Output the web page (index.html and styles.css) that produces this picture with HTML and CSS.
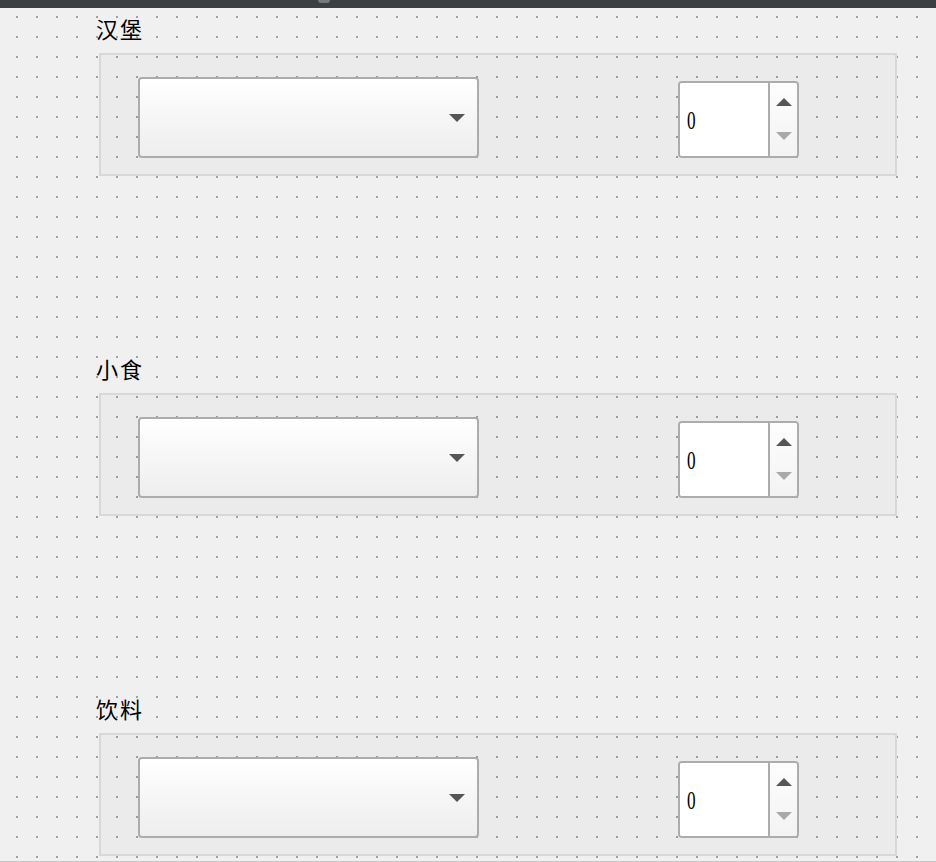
FILE: index.html
```html
<!DOCTYPE html>
<html lang="zh">
<head>
<meta charset="utf-8">
<title>点餐</title>
<link rel="stylesheet" href="styles.css">
</head>
<body>
<div class="window">
  <div class="titlebar"><span class="notch"></span></div>
  <div class="content">
    <section class="section">
      <div class="label">汉堡</div>
      <div class="group">
        <div class="combo"><span class="combo-arrow"></span></div>
        <div class="spin">
          <div class="spin-field"><span class="spin-value">0</span></div>
          <div class="spin-buttons">
            <span class="arrow-up"></span>
            <span class="arrow-down"></span>
          </div>
        </div>
      </div>
    </section>
    <section class="section">
      <div class="label">小食</div>
      <div class="group">
        <div class="combo"><span class="combo-arrow"></span></div>
        <div class="spin">
          <div class="spin-field"><span class="spin-value">0</span></div>
          <div class="spin-buttons">
            <span class="arrow-up"></span>
            <span class="arrow-down"></span>
          </div>
        </div>
      </div>
    </section>
    <section class="section">
      <div class="label">饮料</div>
      <div class="group">
        <div class="combo"><span class="combo-arrow"></span></div>
        <div class="spin">
          <div class="spin-field"><span class="spin-value">0</span></div>
          <div class="spin-buttons">
            <span class="arrow-up"></span>
            <span class="arrow-down"></span>
          </div>
        </div>
      </div>
    </section>
  </div>
</div>
</body>
</html>
```
FILE: styles.css
```css
html, body {
  margin: 0;
  padding: 0;
  background: #f0f0f0;
}

.window {
  width: 936px;
  height: 862px;
  box-sizing: border-box;
  overflow: hidden;
  border-bottom: 1px solid #c4c4c4;
  background-color: #f0f0f0;
  background-image:
    linear-gradient(180deg, #f0f0f0 16px, rgba(240,240,240,0) 16px, rgba(240,240,240,0) 18px, #f0f0f0 18px),
    linear-gradient(90deg, #f0f0f0 16px, #a0a0a0 16px, #a0a0a0 18px, #f0f0f0 18px);
  background-size: 20px 20px, 20px 20px;
  font-family: "Noto Sans CJK SC", "Noto Sans", sans-serif;
  color: #000;
}

.titlebar {
  height: 8px;
  background: #3d3e40;
  display: flex;
}

.notch {
  margin-left: 318px;
  width: 12px;
  height: 3px;
  border-radius: 0 0 6px 6px;
  background: #77787a;
}

.content {
  padding: 8px 0 0 0;
}

.section {
  margin-bottom: 180px;
}

.label {
  height: 30px;
  line-height: 24px;
  padding-left: 96px;
  font-size: 22px;
  letter-spacing: 2px;
  margin-bottom: 7px;
}

.group {
  margin-left: 99px;
  width: 798px;
  height: 123px;
  box-sizing: border-box;
  border: 2px solid #d8d8d8;
  background: rgba(0, 0, 0, 0.018);
  display: flex;
  align-items: flex-start;
  padding: 22px 0 0 37px;
}

.combo {
  width: 341px;
  height: 81px;
  box-sizing: border-box;
  border: 2px solid #acacac;
  border-radius: 4px;
  background: linear-gradient(180deg, #ffffff 0%, #f6f6f6 50%, #eeeeee 100%);
  display: flex;
  align-items: center;
  justify-content: flex-end;
  padding-right: 12px;
}

.combo-arrow {
  width: 0;
  height: 0;
  border-left: 8px solid transparent;
  border-right: 8px solid transparent;
  border-top: 8px solid #565656;
}

.spin {
  margin-left: 199px;
  margin-top: 4px;
  width: 121px;
  height: 77px;
  box-sizing: border-box;
  border: 2px solid #acacac;
  border-radius: 4px;
  display: flex;
  overflow: hidden;
}

.spin-field {
  width: 90px;
  background: #ffffff;
  border-right: 2px solid #acacac;
  display: flex;
  align-items: center;
  padding-left: 6px;
  box-sizing: border-box;
}

.spin-value {
  display: inline-block;
  font-family: "Liberation Serif", serif;
  font-size: 26px;
  line-height: 26px;
  transform: scaleX(0.66);
  transform-origin: left center;
  margin-left: 1px;
  margin-top: 2px;
}

.spin-buttons {
  flex: 1;
  background: linear-gradient(180deg, #fdfdfd 0%, #f3f3f3 100%);
  display: flex;
  flex-direction: column;
  align-items: center;
  padding-top: 15px;
  gap: 26px;
}

.arrow-up {
  width: 0;
  height: 0;
  border-left: 8px solid transparent;
  border-right: 8px solid transparent;
  border-bottom: 8px solid #565656;
}

.arrow-down {
  width: 0;
  height: 0;
  border-left: 8px solid transparent;
  border-right: 8px solid transparent;
  border-top: 8px solid #a9a9a9;
}
```
